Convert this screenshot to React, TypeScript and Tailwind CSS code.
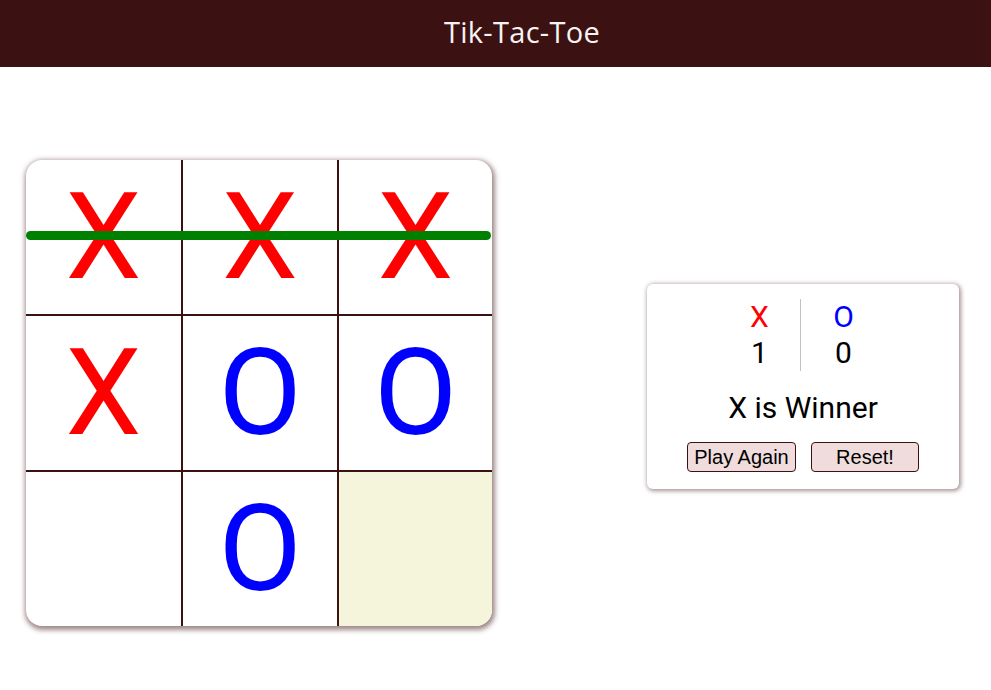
import React from 'react'

const cells = ['X', 'X', 'X', 'X', 'O', 'O', '', 'O', '']

export default function App() {
  return (
    <main className="min-h-screen bg-white" style={{ fontFamily: 'Roboto, sans-serif' }}>
      <header className="h-[67px] bg-[#3b1112] flex items-center justify-center pl-[53px]">
        <h1 className="-mt-[4px] text-[29px] text-[#f7f3f3] font-['Open_Sans',sans-serif] tracking-[0.3px]">Tik-Tac-Toe</h1>
      </header>

      <div className="flex items-center pl-[26px] pt-[93px]">
        <div className="relative w-[466px] h-[466px] rounded-2xl overflow-hidden shadow-[1px_2px_5px_2px_rgba(80,40,40,0.55)] bg-white">
          <div className="grid grid-cols-[157px_156px_153px] grid-rows-[156px_156px_154px]">
            {cells.map((c, i) => {
              const col = i % 3
              const row = Math.floor(i / 3)
              return (
                <div
                  key={i}
                  className={
                    'flex items-center justify-center text-[121px] leading-none ' +
                    (col < 2 ? 'border-r-2 border-r-[#3b1112] ' : '') +
                    (row < 2 ? 'border-b-2 border-b-[#3b1112] ' : '') +
                    (i === 8 ? 'bg-[#f5f5dc] ' : '') +
                    (c === 'X' ? 'text-[#ff0000]' : 'text-[#0000ff]')
                  }
                >
                  {c}
                </div>
              )
            })}
          </div>
          <div className="absolute left-0 top-[71px] w-[465px] h-[9px] rounded-full bg-[#008000]" />
        </div>

        <div className="ml-[155px] mb-[14px] w-[312px] rounded-md bg-white shadow-[1px_1px_4px_1px_rgba(80,40,40,0.5)] pt-[15px] pb-[17px] flex flex-col items-center">
          <div className="flex text-[30px] leading-[36px]">
            <div className="w-20 text-center">
              <div className="text-[#ff0000]">X</div>
              <div className="text-black">1</div>
            </div>
            <div className="w-px bg-[#c8c0c0]" />
            <div className="w-[86px] text-center">
              <div className="text-[#0000ff]">O</div>
              <div className="text-black">0</div>
            </div>
          </div>
          <div className="mt-[19px] text-[30px] leading-[36px] text-black">X is Winner</div>
          <div className="mt-[16px] flex gap-[15px] font-['Liberation_Sans',sans-serif] text-[20px]">
            <button className="w-[109px] h-[30px] rounded bg-[#f0dcdc] border border-[#3b1112] text-black leading-none">Play Again</button>
            <button className="w-[108px] h-[30px] rounded bg-[#f0dcdc] border border-[#3b1112] text-black leading-none">Reset!</button>
          </div>
        </div>
      </div>
    </main>
  )
}
